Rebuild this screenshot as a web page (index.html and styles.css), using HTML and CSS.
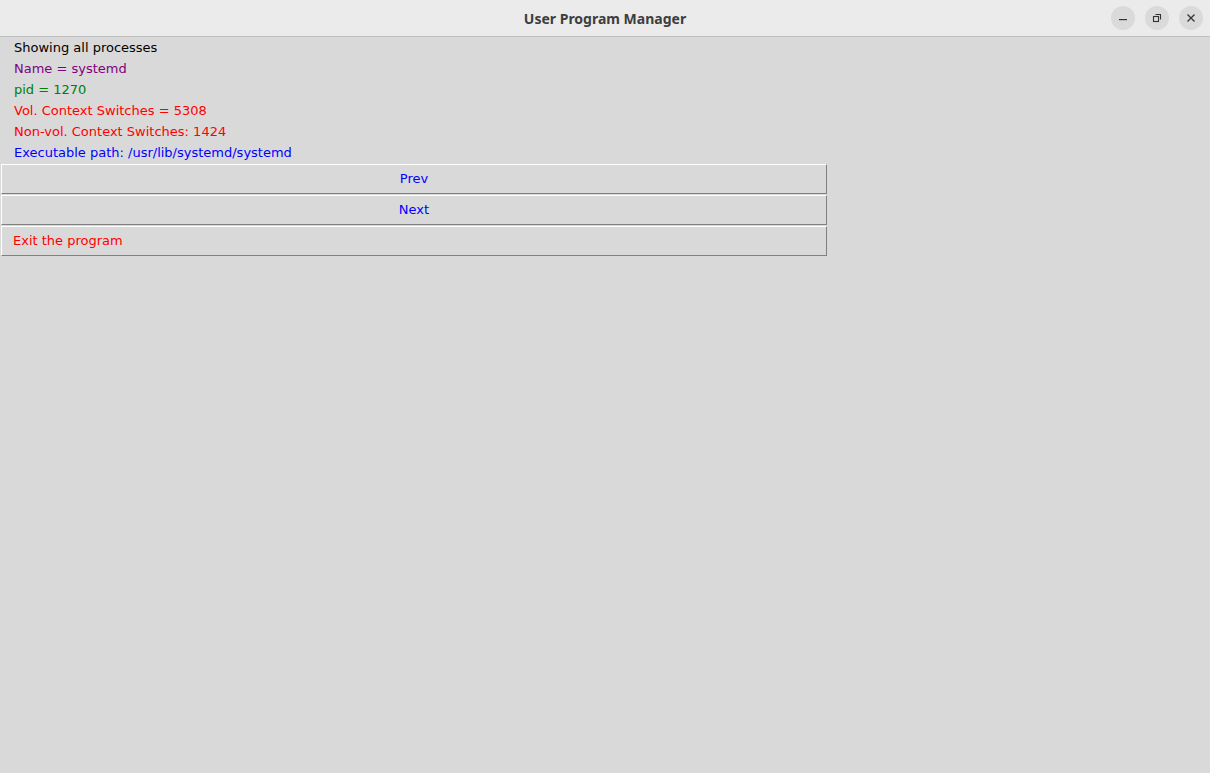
FILE: index.html
```html
<!DOCTYPE html>
<html>
<head>
<meta charset="utf-8">
<link rel="stylesheet" href="styles.css">
</head>
<body>
<div class="window">
  <div class="titlebar">
    <div class="title">User Program Manager</div>
    <div class="controls">
      <div class="ctl"><svg width="24" height="24" viewBox="0 0 24 24"><rect x="8" y="13" width="8" height="1.2" fill="#333"/></svg></div>
      <div class="ctl"><svg width="24" height="24" viewBox="0 0 24 24"><rect x="8.5" y="10.5" width="5" height="5" fill="none" stroke="#333" stroke-width="1.1"/><path d="M10.5 8.5 H15.5 V13.5" fill="none" stroke="#333" stroke-width="1.1"/></svg></div>
      <div class="ctl"><svg width="24" height="24" viewBox="0 0 24 24"><path d="M8.5 8.5 L15.5 15.5 M15.5 8.5 L8.5 15.5" stroke="#333" stroke-width="1.3"/></svg></div>
    </div>
  </div>
  <div class="content">
    <div class="lines">
      <div class="line black">Showing all processes</div>
      <div class="line purple">Name = systemd</div>
      <div class="line green">pid = 1270</div>
      <div class="line red">Vol. Context Switches = 5308</div>
      <div class="line red">Non-vol. Context Switches: 1424</div>
      <div class="line blue">Executable path: /usr/lib/systemd/systemd</div>
    </div>
    <div class="buttons">
      <div class="btn center blue">Prev</div>
      <div class="btn center blue">Next</div>
      <div class="btn left red">Exit the program</div>
    </div>
  </div>
</div>
</body>
</html>
```
FILE: styles.css
```css
html, body {
  margin: 0;
  padding: 0;
  width: 1210px;
  height: 773px;
  overflow: hidden;
  background: #d9d9d9;
}
.window {
  display: flex;
  flex-direction: column;
  height: 773px;
}
.titlebar {
  height: 36px;
  background: #ebebeb;
  border-bottom: 1px solid #bfbfbf;
  display: flex;
  align-items: center;
  justify-content: center;
  position: relative;
  flex: none;
}
.title {
  font-family: "Noto Sans", "DejaVu Sans", sans-serif;
  font-weight: bold;
  font-size: 14px;
  color: #3d3d3d;
}
.controls {
  position: absolute;
  right: 7px;
  top: 6px;
  display: flex;
  gap: 10px;
}
.ctl {
  width: 24px;
  height: 24px;
  border-radius: 50%;
  background: #dadada;
}
.ctl svg { display: block; }
.content {
  font-family: "DejaVu Sans", sans-serif;
  font-size: 13px;
}
.lines {
  padding: 0 0 0 14px;
}
.line {
  height: 21px;
  line-height: 21px;
}
.black { color: #000000; }
.purple { color: #800080; }
.green { color: #008000; }
.red { color: #ff0000; }
.blue { color: #0000ff; }
.buttons {
  display: flex;
  flex-direction: column;
  gap: 1px;
  padding-left: 1px;
  padding-top: 1px;
}
.btn {
  width: 824px;
  height: 28px;
  line-height: 28px;
  border-top: 1px solid #ffffff;
  border-left: 1px solid #ffffff;
  border-bottom: 1px solid #808080;
  border-right: 1px solid #808080;
  background: #d9d9d9;
}
.btn.center { text-align: center; }
.btn.left { padding-left: 11px; width: 813px; }
```
